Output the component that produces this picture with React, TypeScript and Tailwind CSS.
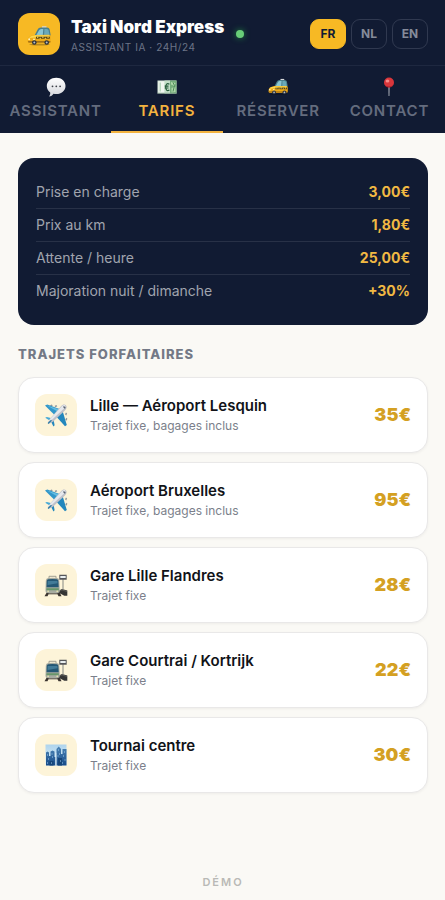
import { useState } from "react";

type IconProps = { className?: string };

function TaxiIcon({ className }: IconProps) {
  return (
    <svg className={className} viewBox="0 0 24 20" aria-hidden="true">
      <ellipse cx="12.500" cy="18.600" rx="10.500" ry=".8" fill="#000" opacity=".25" />
      <path d="M15 .3h4.500v1.600H15z" fill="#d8dadb" />
      <path d="M7.500 9.500 10.500 3.800q1-2.100 3.200-2.200l6.300-.1q2.300 0 2.700 2l1 6z" fill="#4b7f8d" />
      <path d="M9.300 9.200l2.600-4.800q.8-1.500 2.300-1.500h2.100l-.5 6.200z" fill="#89c6d3" />
      <path d="M17.400 2.900h2.400q1.500 0 1.800 1.500l.9 4.600-5.400.2z" fill="#6aa9b8" />
      <path d="M.8 13.200q.3-2.500 2.800-3.200l4.300-1.100 14.200-.2q1.600.2 1.600 2v4.700q0 1.700-1.700 1.700H2.700q-1.900 0-2-1.800z" fill="#efab18" />
      <path d="M2 12q1-1.500 2.800-1.900l3.700-.8 13.300-.1q1 .2 1 1.300l-11 .7z" fill="#ffd94d" />
      <path d="M9 10.700h13.800v2H9z" fill="#55410f" />
      <path d="M10 10.700h1.300v1H10zM12.600 11.700h1.300v1h-1.300zM15.200 10.700h1.300v1h-1.300zM17.800 11.700h1.300v1h-1.300zM20.400 10.700h1.300v1h-1.300z" fill="#ffe46a" />
      <path d="M1 15.300h22.500l-.3 1.300H1.400z" fill="#8b5e15" />
      <circle cx="2.200" cy="13.300" r="1" fill="#fff5c0" />
      <circle cx="7" cy="13.300" r=".9" fill="#fff5c0" />
      <circle cx="7.300" cy="16.500" r="2.300" fill="#29303a" />
      <circle cx="7.300" cy="16.500" r="1" fill="#b9bec4" />
      <circle cx="19.700" cy="16.500" r="2.300" fill="#29303a" />
      <circle cx="19.700" cy="16.500" r="1" fill="#b9bec4" />
    </svg>
  );
}

function BubbleIcon({ className }: IconProps) {
  return (
    <svg className={className} viewBox="0 0 20 20" aria-hidden="true">
      <defs>
        <linearGradient id="bubble" x1="0" y1="0" x2="0" y2="1">
          <stop offset="0" stopColor="#fff" />
          <stop offset="1" stopColor="#d3d5da" />
        </linearGradient>
      </defs>
      <path d="M10.300.8c5.200 0 9.200 3.500 9.200 8.100s-4 8.200-9.200 8.200c-1 0-1.900-.1-2.800-.4-.9 1.500-2.500 2.700-4.400 2.800.9-1.200 1.300-2.600 1.100-4C2.200 14 .8 11.600.8 8.900.8 4.300 5 .8 10.300.8z" fill="url(#bubble)" />
      <circle cx="6.500" cy="9.300" r=".9" fill="#3d4047" />
      <circle cx="10.300" cy="9.300" r=".9" fill="#3d4047" />
      <circle cx="14.100" cy="9.300" r=".9" fill="#3d4047" />
    </svg>
  );
}

function EuroNoteIcon({ className }: IconProps) {
  return (
    <svg className={className} viewBox="0 0 20 20" aria-hidden="true">
      <path d="M.5 3.500h19v13H.5z" fill="#d9eadb" />
      <path d="M1.500 4.500h6v11h-6z" fill="#f0f6f0" />
      <path d="M2.500 5.500H4v9H2.500z" fill="#b9d8bf" />
      <path d="M13 3.500h6.500v13H13z" fill="#75ad7c" />
      <path d="M14 5l4.500 1-1 3L14 7.500zM14.500 11l4-1.500V15l-4 .5z" fill="#aed6a8" />
      <path d="M16 5.500l1.500 3-1.500 6" fill="none" stroke="#4c8a58" strokeWidth="1" />
      <path d="M7.500 3.500H13v13H7.500z" fill="#c3dfc8" />
      <path d="M12.400 7.200c-2.400-1.400-3.700.2-3.700 2.900s1.300 4.300 3.700 2.900M7.700 9.200h3.800M7.700 11h3.800" fill="none" stroke="#265d3c" strokeWidth="1.200" />
      <path d="M.5 15.800h19v.7H.5z" fill="#819d88" />
    </svg>
  );
}

function PinIcon({ className }: IconProps) {
  return (
    <svg className={className} viewBox="0 0 20 20" aria-hidden="true">
      <path d="M9.400 9h1.200l-.2 10h-.8z" fill="#b6bac2" />
      <circle cx="10" cy="5.500" r="5" fill="#d9363b" />
      <path d="M5.800 8.300q4 2.600 8.400 0-1.500 2.300-4.200 2.300T5.800 8.300z" fill="#a51f2b" />
      <ellipse cx="8.500" cy="3.900" rx="1.900" ry="1.500" fill="#f58b88" />
    </svg>
  );
}

function PlaneIcon({ className }: IconProps) {
  return (
    <svg className={className} viewBox="0 0 24 24" aria-hidden="true">
      <path d="M6 2.300l1.800-.9 1 1.200-1.800 1zM10.500 2.900l1.800-.9 1 1.200-1.800 1zM21 11.300l1-1.800 1.100 1-.9 2zM21.300 16.500l1-1.800 1.100 1-.9 2z" fill="#8d959d" />
      <path d="M1 2.400l2.300-.9L17 6.500l-6.200 5.800z" fill="#3297ca" />
      <path d="M3 2.500l12.500 4-2 2z" fill="#64bce1" />
      <path d="M12.200 13.500l6.200-6.200 4.400 14.800-1.800 1.100z" fill="#2387bd" />
      <path d="M1.200 14.700l1.600-.8 6 1.600-1.500 3z" fill="#45a9d6" />
      <path d="M6.500 17.500l2.900-1.600 1.200 6.300-1.200 1.300z" fill="#2387bd" />
      <path d="M21.900 2.300c1.500 1.500.6 3.600-1 5.200L9.200 18.400c-1.700 1.400-4.400 2.500-5 2s.5-3.300 2-5L17 3.300c1.500-1.600 3.500-2.300 4.900-1z" fill="#bfc1ca" />
      <path d="M21 2.300c.8.8 0 2.300-1.200 3.500L8.500 16.300c-1.400 1.200-2.900 2-3.200 1.700s.5-1.600 1.600-2.900L17.400 3.800C18.700 2.500 20.200 1.600 21 2.300z" fill="#e6e8ed" />
      <path d="M20 3.100l1.700 1.600-.9 1-1.800-1.600z" fill="#58626f" />
      <path d="M4 20.500l3.500-3.200" stroke="#2d7ba6" strokeWidth="1.200" />
    </svg>
  );
}

function StationIcon({ className }: IconProps) {
  return (
    <svg className={className} viewBox="0 0 24 24" aria-hidden="true">
      <path d="M15 17.500l3-1.500 5.300 1.600v5.200h-3l-6-3.300z" fill="#353535" />
      <path d="M16 17.800l2-.9 5 1.600" fill="none" stroke="#686864" strokeWidth=".7" />
      <path d="M18.500 6h1v10.500h-1z" fill="#858784" />
      <path d="M15.300 1.800h7.400v5h-7.400z" fill="#55565a" />
      <path d="M16.300 3h5.400v2h-5.400z" fill="#e9eef0" />
      <path d="M5 5V3.300h7V5" fill="none" stroke="#96958a" strokeWidth=".9" />
      <path d="M3 19h12.500l2 4.200h-3l-1-2H4.500l-1 2H.5z" fill="#3c3530" />
      <path d="M1.800 7.500q.2-2.200 2.500-2.500 4.300-.6 8.600 0 2.300.3 2.400 2.500l.5 10.500q0 2-2 2H3.500q-2 0-2-2z" fill="#a7aba1" />
      <path d="M2.800 8q.1-1.500 1.500-1.800 4.300-.5 8.500 0 1.400.2 1.500 1.800l.4 6.300H2.500z" fill="#245774" />
      <path d="M3.700 8h9.700l.2 2.300-10 1.700z" fill="#427b98" />
      <path d="M2.500 15.200h12.300v2H2.400z" fill="#68966b" />
      <circle cx="4.100" cy="18.300" r=".8" fill="#f5efb3" />
      <circle cx="13.200" cy="18.300" r=".8" fill="#f5efb3" />
      <path d="M4.500 20.700h9" stroke="#a09e91" strokeWidth=".7" />
    </svg>
  );
}

function CityIcon({ className }: IconProps) {
  return (
    <svg className={className} viewBox="0 0 24 24" aria-hidden="true">
      <defs>
        <linearGradient id="sky" x1="0" y1="0" x2="0" y2="1">
          <stop offset="0" stopColor="#aed4ed" />
          <stop offset="1" stopColor="#e2f2f9" />
        </linearGradient>
        <linearGradient id="tower" x1="0" y1="0" x2="0" y2="1">
          <stop offset="0" stopColor="#4b84b5" />
          <stop offset="1" stopColor="#174b89" />
        </linearGradient>
      </defs>
      <path d="M1.500 1.500h21v21h-21z" fill="url(#sky)" />
      <path d="M2 9.500l1.500-1L5 9.500V13h1.500V8.500l2-1 2 1v14H2zM10 14h1.500v8.500H10zM12.500 6l2.200-2.500L17 6v16.500h-4.500zM17 11h1.500V6h4v16.500H17z" fill="url(#tower)" />
      <path d="M5.500 18h4v4.500h-4zM14 15h4v7.500h-4z" fill="#154579" />
      <path d="M3 12h1M7.500 11h1M4 16h1M8 14h1M7 20h1M14 7h1M15 11h1M13.500 13h1M16 18h1M20 9h1M19 13h1M20.500 17h1M3 20h1M18 20h1" stroke="#9bc8eb" strokeWidth="1" />
      <path d="M11.800 10v12.500" stroke="#d6ebf7" strokeWidth=".8" />
    </svg>
  );
}

const languages = ["FR", "NL", "EN"];

const tabs = [
  { label: "ASSISTANT", Icon: BubbleIcon },
  { label: "TARIFS", Icon: EuroNoteIcon },
  { label: "RÉSERVER", Icon: TaxiIcon },
  { label: "CONTACT", Icon: PinIcon },
];

const rates = [
  ["Prise en charge", "3,00€"],
  ["Prix au km", "1,80€"],
  ["Attente / heure", "25,00€"],
  ["Majoration nuit / dimanche", "+30%"],
];

const trips = [
  { name: "Lille — Aéroport Lesquin", note: "Trajet fixe, bagages inclus", price: "35€", Icon: PlaneIcon },
  { name: "Aéroport Bruxelles", note: "Trajet fixe, bagages inclus", price: "95€", Icon: PlaneIcon },
  { name: "Gare Lille Flandres", note: "Trajet fixe", price: "28€", Icon: StationIcon },
  { name: "Gare Courtrai / Kortrijk", note: "Trajet fixe", price: "22€", Icon: StationIcon },
  { name: "Tournai centre", note: "Trajet fixe", price: "30€", Icon: CityIcon },
];

export default function App() {
  const [language, setLanguage] = useState("FR");
  const [tab, setTab] = useState("TARIFS");

  return (
    <div className="flex min-h-screen flex-col bg-[#faf9f5] font-['Inter',sans-serif] text-[#111318]">
      <header className="bg-[#111b33]">
        <div className="flex items-center border-b border-[#1e2840] pt-[13px] pr-[17px] pb-[10px] pl-[18px]">
          <div className="flex size-[42px] shrink-0 items-center justify-center rounded-xl bg-[#f7b924] pt-1">
            <TaxiIcon className="h-5 w-6" />
          </div>
          <div className="ml-[11px] pt-1">
            <h1 className="text-[17px] leading-5 font-black whitespace-nowrap text-white">Taxi Nord Express</h1>
            <p className="pt-[2px] text-[10px] leading-4 tracking-[0.6px] whitespace-nowrap text-[#6c7487]">
              ASSISTANT IA · 24H/24
            </p>
          </div>
          <span className="ml-3 size-2 rounded-full bg-[#68ce78] shadow-[0_0_6px_#22883f]" />
          <div className="ml-auto flex gap-[5px]">
            {languages.map((code) => (
              <button
                key={code}
                type="button"
                aria-pressed={language === code}
                onClick={() => setLanguage(code)}
                className={`h-[30px] w-9 rounded-[9px] border text-xs font-bold ${
                  language === code
                    ? "border-[#f7b924] bg-[#f7b924] text-[#111b33]"
                    : "border-[#303950] text-[#858b9a]"
                }`}
              >
                {code}
              </button>
            ))}
          </div>
        </div>
        <nav className="grid grid-cols-4">
          {tabs.map(({ label, Icon }) => (
            <button
              key={label}
              type="button"
              onClick={() => setTab(label)}
              className={`flex h-[67px] flex-col items-center border-b-2 pt-[11px] ${
                tab === label ? "border-[#f3b33f] text-[#f3b33f]" : "border-transparent text-[#646c7e]"
              }`}
            >
              <Icon className="size-5" />
              <span className="mt-1 text-[15px] leading-5 font-semibold tracking-[0.8px]">{label}</span>
            </button>
          ))}
        </nav>
      </header>

      <main className="flex flex-1 flex-col pt-[25px] pr-[17px] pl-[18px]">
        <dl className="rounded-2xl bg-[#111b33] px-[18px] py-[18px]">
          {rates.map(([label, value]) => (
            <div
              key={label}
              className="flex items-center justify-between border-b border-[#283147] py-[6px] text-sm leading-5 last:border-b-0"
            >
              <dt className="text-[#a0a4ae]">{label}</dt>
              <dd className="font-bold text-[#f1b943]">{value}</dd>
            </div>
          ))}
        </dl>

        <h2 className="mt-5 text-[13px] leading-[18px] font-extrabold tracking-[1px] text-[#747986]">
          TRAJETS FORFAITAIRES
        </h2>

        <ul className="mt-[14px] flex flex-col gap-[9px]">
          {trips.map(({ name, note, price, Icon }) => (
            <li
              key={name}
              className="flex items-center rounded-2xl border border-[#e9e8e8] bg-white p-4 shadow-[0_1px_3px_rgba(0,0,0,0.05)]"
            >
              <div className="flex size-[42px] shrink-0 items-center justify-center rounded-xl bg-[#fdf4d9]">
                <Icon className="size-6" />
              </div>
              <div className="ml-[13px] flex-1">
                <h3 className="text-[15px] leading-[22px] font-semibold">{name}</h3>
                <p className="text-xs leading-[18px] text-[#7b7f8b]">{note}</p>
              </div>
              <p className="text-lg font-black text-[#d4a022]">{price}</p>
            </li>
          ))}
        </ul>
        <footer className="mt-auto pb-[10px] text-center text-[11px] leading-4 font-semibold tracking-[2px] text-[#b9b9b6]">
          DÉMO
        </footer>
      </main>
    </div>
  );
}
